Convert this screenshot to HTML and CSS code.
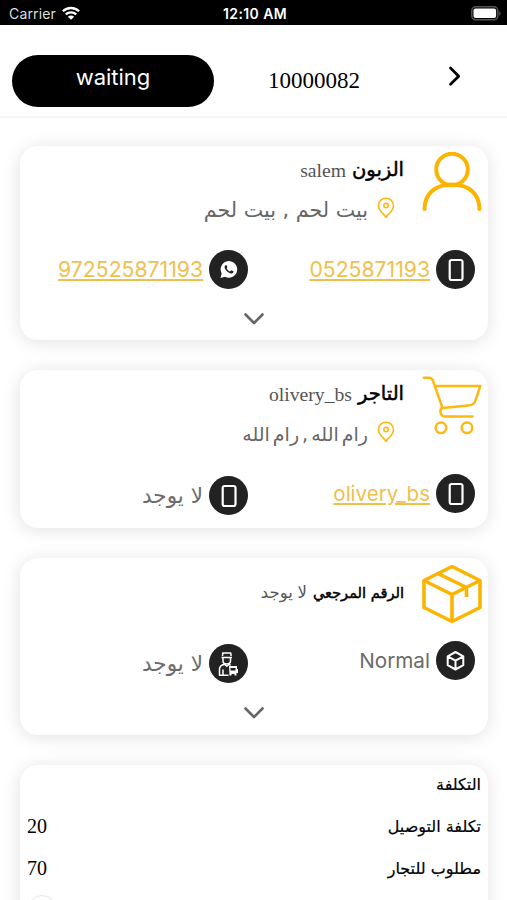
FILE: index.html
```html
<!DOCTYPE html>
<html lang="ar" dir="rtl">
<head>
    <meta charset="UTF-8">
    <meta name="viewport" content="width=device-width, initial-scale=1.0">
    <title>10000082</title>
    <link rel="stylesheet" href="styles.css">
</head>
<body>
    <svg class="sprite" width="0" height="0">
        <symbol id="pin" viewBox="0 0 18 22">
            <path d="M9 20.500C7.500 17 1.500 14 1.500 8.700a7.500 7.500 0 0 1 15 0C16.500 14 10.500 17 9 20.500z" fill="none" stroke="#fdb813" stroke-width="1.600" stroke-linejoin="round"/>
            <circle cx="9" cy="8.500" r="2.300" fill="#fff3d0" stroke="#fdb813" stroke-width="1.500"/>
        </symbol>
        <symbol id="phone" viewBox="0 0 39 39">
            <rect x="13.700" y="10" width="12.800" height="20" rx="2" fill="none" stroke="#fff" stroke-width="2.200"/>
        </symbol>
        <symbol id="chevron" viewBox="0 0 22 14">
            <path d="M2.500 2.500L11 11l8.500-8.500" fill="none" stroke="#666" stroke-width="2.600" stroke-linecap="round" stroke-linejoin="round"/>
        </symbol>
    </svg>

    <div class="status-bar" dir="ltr">
        <div class="carrier">
            <span>Carrier</span>
            <svg width="18" height="14" viewBox="0 0 18 14">
                <g fill="none" stroke="#fff" stroke-width="2.300">
                    <path d="M.9 5.300a11.600 11.600 0 0 1 16.200 0"/>
                    <path d="M3.800 8.400a7.500 7.500 0 0 1 10.400 0"/>
                </g>
                <path d="M9 13.800L5.900 10.700a4.400 4.400 0 0 1 6.200 0z" fill="#fff"/>
            </svg>
        </div>
        <div class="clock">12:10 AM</div>
        <div class="battery">
            <svg width="30" height="15" viewBox="0 0 30 15">
                <rect x=".8" y=".8" width="26" height="13" rx="3.800" fill="none" stroke="#555" stroke-width="1.500"/>
                <rect x="2.500" y="2.500" width="22.600" height="9.600" rx="2" fill="#fff"/>
                <path d="M28.300 5v4.800c1.600-.9 1.600-3.900 0-4.800z" fill="#666"/>
            </svg>
        </div>
    </div>

    <div class="header" dir="ltr">
        <div class="status-btn">waiting</div>
        <div class="order-id">10000082</div>
        <svg class="next" width="14" height="22" viewBox="0 0 14 22">
            <path d="M2.500 3L10.700 11.200 2.500 19.300" fill="none" stroke="#000" stroke-width="2.700" stroke-linecap="round" stroke-linejoin="round"/>
        </svg>
    </div>

    <div class="cards">
        <div class="card">
            <div class="card-head">
                <svg class="card-icon" width="60" height="60" viewBox="0 0 60 60">
                    <g fill="none" stroke="#fdb400" stroke-width="4" stroke-linecap="round">
                        <circle cx="30" cy="17.500" r="15.800"/>
                        <path d="M2.500 57C2.500 43 12 32.500 30 32.500S57.500 43 57.500 57"/>
                    </g>
                </svg>
                <div class="card-info">
                    <div class="title"><b>الزبون</b><span class="latin">salem</span></div>
                    <div class="address"><svg width="18" height="22"><use href="#pin"/></svg><span>بيت لحم , بيت لحم</span></div>
                </div>
            </div>
            <div class="contacts">
                <div class="contact">
                    <svg class="round" width="39" height="39"><use href="#phone"/></svg>
                    <a class="link">0525871193</a>
                </div>
                <div class="contact">
                    <svg class="round" width="39" height="39" viewBox="0 0 39 39">
                        <path d="M11.500 28l1.200-4.500a8.300 8.300 0 1 1 3.300 3.200z" fill="#fff"/>
                        <path d="M16.500 15.300c-1.500 1-1.200 3.200.7 5.300 2 2.300 4.600 3.500 6.200 2.600 1-.6 1.300-1.500 1-1.900l-2.200-1.100-1.200 1.200c-1.600-.6-2.700-1.700-3.400-3.200l.8-1-.9-2.100z" fill="#222"/>
                    </svg>
                    <a class="link">972525871193</a>
                </div>
            </div>
            <div class="expand"><svg width="22" height="14"><use href="#chevron"/></svg></div>
        </div>

        <div class="card">
            <div class="card-head">
                <svg class="card-icon" width="60" height="60" viewBox="0 0 60 60">
                    <g fill="none" stroke="#fdb813" stroke-width="2.500" stroke-linecap="round" stroke-linejoin="round">
                        <path d="M1.800 1.800h5c2.500 0 3.700 1.200 4.500 3.700L20.500 32 46 29.500c4-.3 6.500-1.500 7.500-5l4.800-14.500H13"/>
                        <path d="M20.500 32c-3.500 1.500-2.500 8.500 2.500 8.500h27.500"/>
                        <circle cx="19" cy="51.800" r="5.300"/>
                        <circle cx="45" cy="51.800" r="5.300"/>
                    </g>
                </svg>
                <div class="card-info">
                    <div class="title"><b>التاجر</b><span class="latin">olivery_bs</span></div>
                    <div class="address city"><svg width="18" height="22"><use href="#pin"/></svg><span>رام الله , رام الله</span></div>
                </div>
            </div>
            <div class="contacts">
                <div class="contact">
                    <svg class="round" width="39" height="39"><use href="#phone"/></svg>
                    <a class="link name">olivery_bs</a>
                </div>
                <div class="contact empty">
                    <svg class="round" width="39" height="39"><use href="#phone"/></svg>
                    <span>لا يوجد</span>
                </div>
            </div>
        </div>

        <div class="card">
            <div class="card-head reference">
                <svg class="card-icon" width="60" height="60" viewBox="0 0 60 60">
                    <g fill="none" stroke="#fdb400" stroke-width="3.600" stroke-linejoin="round">
                        <path d="M30 2.500L58 16.500V43.500L30 57.500 2 43.500V16.500z"/>
                        <path d="M2 16.500L30 30.500 58 16.500M30 30.500V57.500M16 9.500L44.500 23.500V33"/>
                    </g>
                </svg>
                <div class="card-info">
                    <div class="title"><b>الرقم المرجعي</b><span>لا يوجد</span></div>
                </div>
            </div>
            <div class="contacts">
                <div class="contact">
                    <svg class="round" width="39" height="39" viewBox="0 0 39 39">
                        <path d="M19.500 11l7.800 4.300v8.900l-7.800 4.300-7.800-4.300v-8.900zM11.700 15.300l7.800 4.300 7.800-4.300M19.500 19.600v8.900" fill="none" stroke="#fff" stroke-width="2" stroke-linejoin="round"/>
                    </svg>
                    <span>Normal</span>
                </div>
                <div class="contact empty">
                    <svg class="round" width="39" height="39" viewBox="0 0 39 39">
                        <g fill="none" stroke="#fff" stroke-width="1.500" stroke-linejoin="round">
                            <path d="M13.500 12l.3-3h8l.3 3M12.500 13.500h10.500M14 14v3c0 4 7.500 4 7.500 0v-3"/>
                            <path d="M15.500 20.300c-3.500.8-5 2-5 5v6h9M14 31v-5.500M15.500 20.300l2.300 2 2.300-2 1.500 1"/>
                        </g>
                        <path d="M20 22h8v3h1v4h-1.500v2.500h-2v-1.500h-3v1.500h-2z" fill="#fff"/>
                        <path d="M21.500 24h5v2.500h-5z" fill="#222"/>
                    </svg>
                    <span>لا يوجد</span>
                </div>
            </div>
            <div class="expand"><svg width="22" height="14"><use href="#chevron"/></svg></div>
        </div>

        <div class="card costs">
            <div class="cost-row"><span>التكلفة</span></div>
            <div class="cost-row"><span>تكلفة التوصيل</span><span class="amount">20</span></div>
            <div class="cost-row"><span>مطلوب للتجار</span><span class="amount">70</span></div>
            <div class="cost-more"></div>
        </div>
    </div>
</body>
</html>
```

FILE: styles.css
```css
* {
    box-sizing: border-box;
}
body {
    margin: 0;
    height: 900px;
    overflow: hidden;
    background: #fff;
    color: #000;
    font-family: Inter, "DejaVu Sans", sans-serif;
}
svg {
    display: block;
    flex: none;
}
.sprite {
    position: absolute;
}
.status-bar {
    height: 25px;
    padding: 1px 6px 0 9px;
    background: #000;
    color: #fff;
    display: grid;
    grid-template-columns: 1fr auto 1fr;
    align-items: center;
    font-size: 14px;
}
.carrier {
    display: flex;
    align-items: center;
    gap: 6px;
    color: #ddd;
}
.carrier span {
    letter-spacing: 0.15px;
}
.clock {
    font-size: 14px;
    font-weight: 600;
    letter-spacing: 0.4px;
}
.battery {
    justify-self: end;
}
.header {
    height: 93px;
    padding: 3px 45px 0 12px;
    border-bottom: 2px solid #f5f5f5;
    display: flex;
    align-items: center;
}
.status-btn {
    width: 202px;
    height: 52px;
    margin-top: 18px;
    border-radius: 26px;
    background: #000;
    color: #fff;
    font-size: 22px;
    line-height: 45px;
    text-align: center;
}
.order-id {
    margin: 17px 0 0 54px;
    font-family: "Liberation Serif", serif;
    font-size: 23px;
}
.next {
    margin: 8px 0 0 auto;
}
.cards {
    height: 782px;
    padding: 28px 19px 0 20px;
    overflow: hidden;
    display: flex;
    flex-direction: column;
    gap: 30px;
}
.card {
    flex: none;
    border-radius: 18px;
    background: #fff;
    box-shadow: 0 2px 18px rgba(0, 0, 0, 0.12);
}
.card-head {
    height: 86px;
    padding: 6px 6px 0;
    display: flex;
    gap: 18px;
}
.title {
    height: 37px;
    display: flex;
    align-items: center;
    gap: 6px;
    color: #555;
    font-size: 17px;
}
.title b {
    margin-top: -3px;
    color: #000;
    font-family: "DejaVu Sans", sans-serif;
    font-size: 19.5px;
    font-weight: 500;
    -webkit-text-stroke: 0.5px #000;
}
.latin {
    font-family: "Liberation Serif", serif;
    font-size: 19.7px;
}
.address {
    height: 42px;
    padding-right: 9px;
    display: flex;
    align-items: center;
    gap: 9px;
    color: #666;
    font-family: "DejaVu Sans", sans-serif;
    font-size: 20.7px;
}
.address.city {
    font-size: 19px;
    word-spacing: -3px;
}
.address svg {
    margin-bottom: 5px;
}
.contacts {
    height: 74px;
    padding: 0 13px 0 0;
    display: grid;
    grid-template-columns: 227px 1fr;
    align-items: center;
}
.contact {
    display: flex;
    align-items: center;
    gap: 6px;
    color: #6b6b6b;
    font-size: 20.7px;
}
.contact.empty {
    padding-top: 5px;
    font-family: "DejaVu Sans", sans-serif;
    font-size: 21.6px;
}
.round {
    border-radius: 50%;
    background: #222;
}
.link {
    color: #f0c04d;
    font-size: 21.2px;
    text-decoration: underline;
    text-underline-offset: 2px;
}
.link.name {
    font-size: 20.5px;
}
.expand {
    height: 34px;
    padding-top: 6px;
    display: flex;
    justify-content: center;
}
.card:nth-child(2) .contacts {
    height: 72px;
    padding-top: 2px;
}
.reference {
    height: 66px;
}
.reference + .contacts {
    height: 75px;
    padding-bottom: 2px;
}
.reference + .contacts + .expand {
    height: 36px;
    padding-top: 7px;
}
.reference .title {
    height: 56px;
}
.reference b {
    margin-top: 0;
    font-size: 14.6px;
}
.reference .title b {
    margin-top: 0;
    font-size: 14.6px;
}
.reference .title span {
    font-size: 16.5px;
}
.costs {
    height: 200px;
    padding: 0 7px;
    font-family: "DejaVu Sans", sans-serif;
    font-size: 16px;
}
.cost-row {
    height: 42px;
    padding-bottom: 4px;
    display: flex;
    align-items: center;
    justify-content: space-between;
    -webkit-text-stroke: 0.2px #000;
}
.amount {
    font-family: "Liberation Serif", serif;
    font-size: 20px;
    -webkit-text-stroke: 0;
}
.cost-more {
    width: 30px;
    height: 30px;
    margin: 4px auto 0 0;
    border: 1px solid #e5e5e5;
    border-radius: 50%;
}
```
